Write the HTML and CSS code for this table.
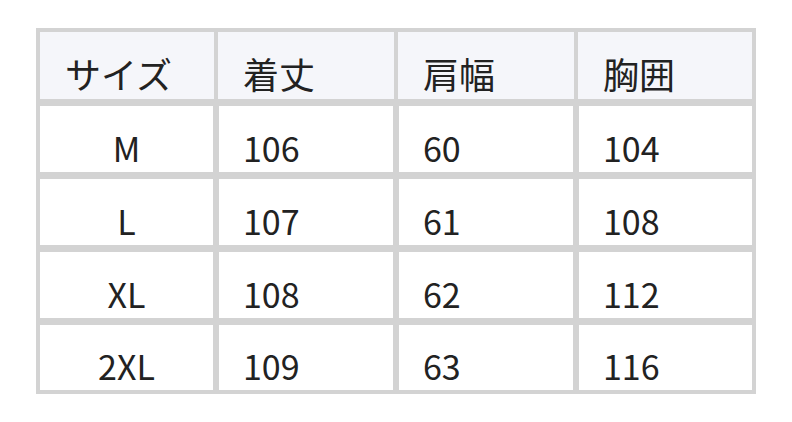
FILE: index.html
```html
<!DOCTYPE html>
<html lang="ja">
<head>
<meta charset="utf-8">
<link rel="stylesheet" href="styles.css">
</head>
<body>
<div class="page">
  <div class="size-table">
    <div class="cell head">サイズ</div>
    <div class="cell head">着丈</div>
    <div class="cell head">肩幅</div>
    <div class="cell head">胸囲</div>

    <div class="cell body first center">M</div>
    <div class="cell body">106</div>
    <div class="cell body">60</div>
    <div class="cell body last">104</div>

    <div class="cell body first center">L</div>
    <div class="cell body">107</div>
    <div class="cell body">61</div>
    <div class="cell body last">108</div>

    <div class="cell body first center">XL</div>
    <div class="cell body">108</div>
    <div class="cell body">62</div>
    <div class="cell body last">112</div>

    <div class="cell body first center">2XL</div>
    <div class="cell body">109</div>
    <div class="cell body">63</div>
    <div class="cell body last">116</div>
  </div>
</div>
</body>
</html>
```

FILE: styles.css
```css
html, body {
  margin: 0;
  padding: 0;
  background: #ffffff;
}

.page {
  padding: 28px 0 0 36px;
}

.size-table {
  width: 720px;
  box-sizing: border-box;
  padding: 4px 3px 4px 4px;
  background: #d3d3d3;
  display: grid;
  grid-template-columns: 174px 176px 176px 174px;
  grid-template-rows: 67px 66px 66px 66px 65px;
  column-gap: 4px;
  row-gap: 7px;
  font-family: "Noto Sans CJK JP", "Noto Sans", sans-serif;
  font-size: 34px;
  color: #222222;
}

.cell {
  display: flex;
  align-items: flex-end;
  line-height: normal;
  padding-left: 25px;
  box-sizing: border-box;
}

.head {
  background: #f5f6fa;
  font-size: 36px;
}

.body {
  background: #ffffff;
  border-left: 1px solid #d3d3d3;
  border-right: 1px solid #d3d3d3;
  padding-left: 24px;
}

.body.first {
  border-left: none;
}

.body.last {
  border-right: none;
}

.center {
  justify-content: center;
  padding-left: 0;
}
```
